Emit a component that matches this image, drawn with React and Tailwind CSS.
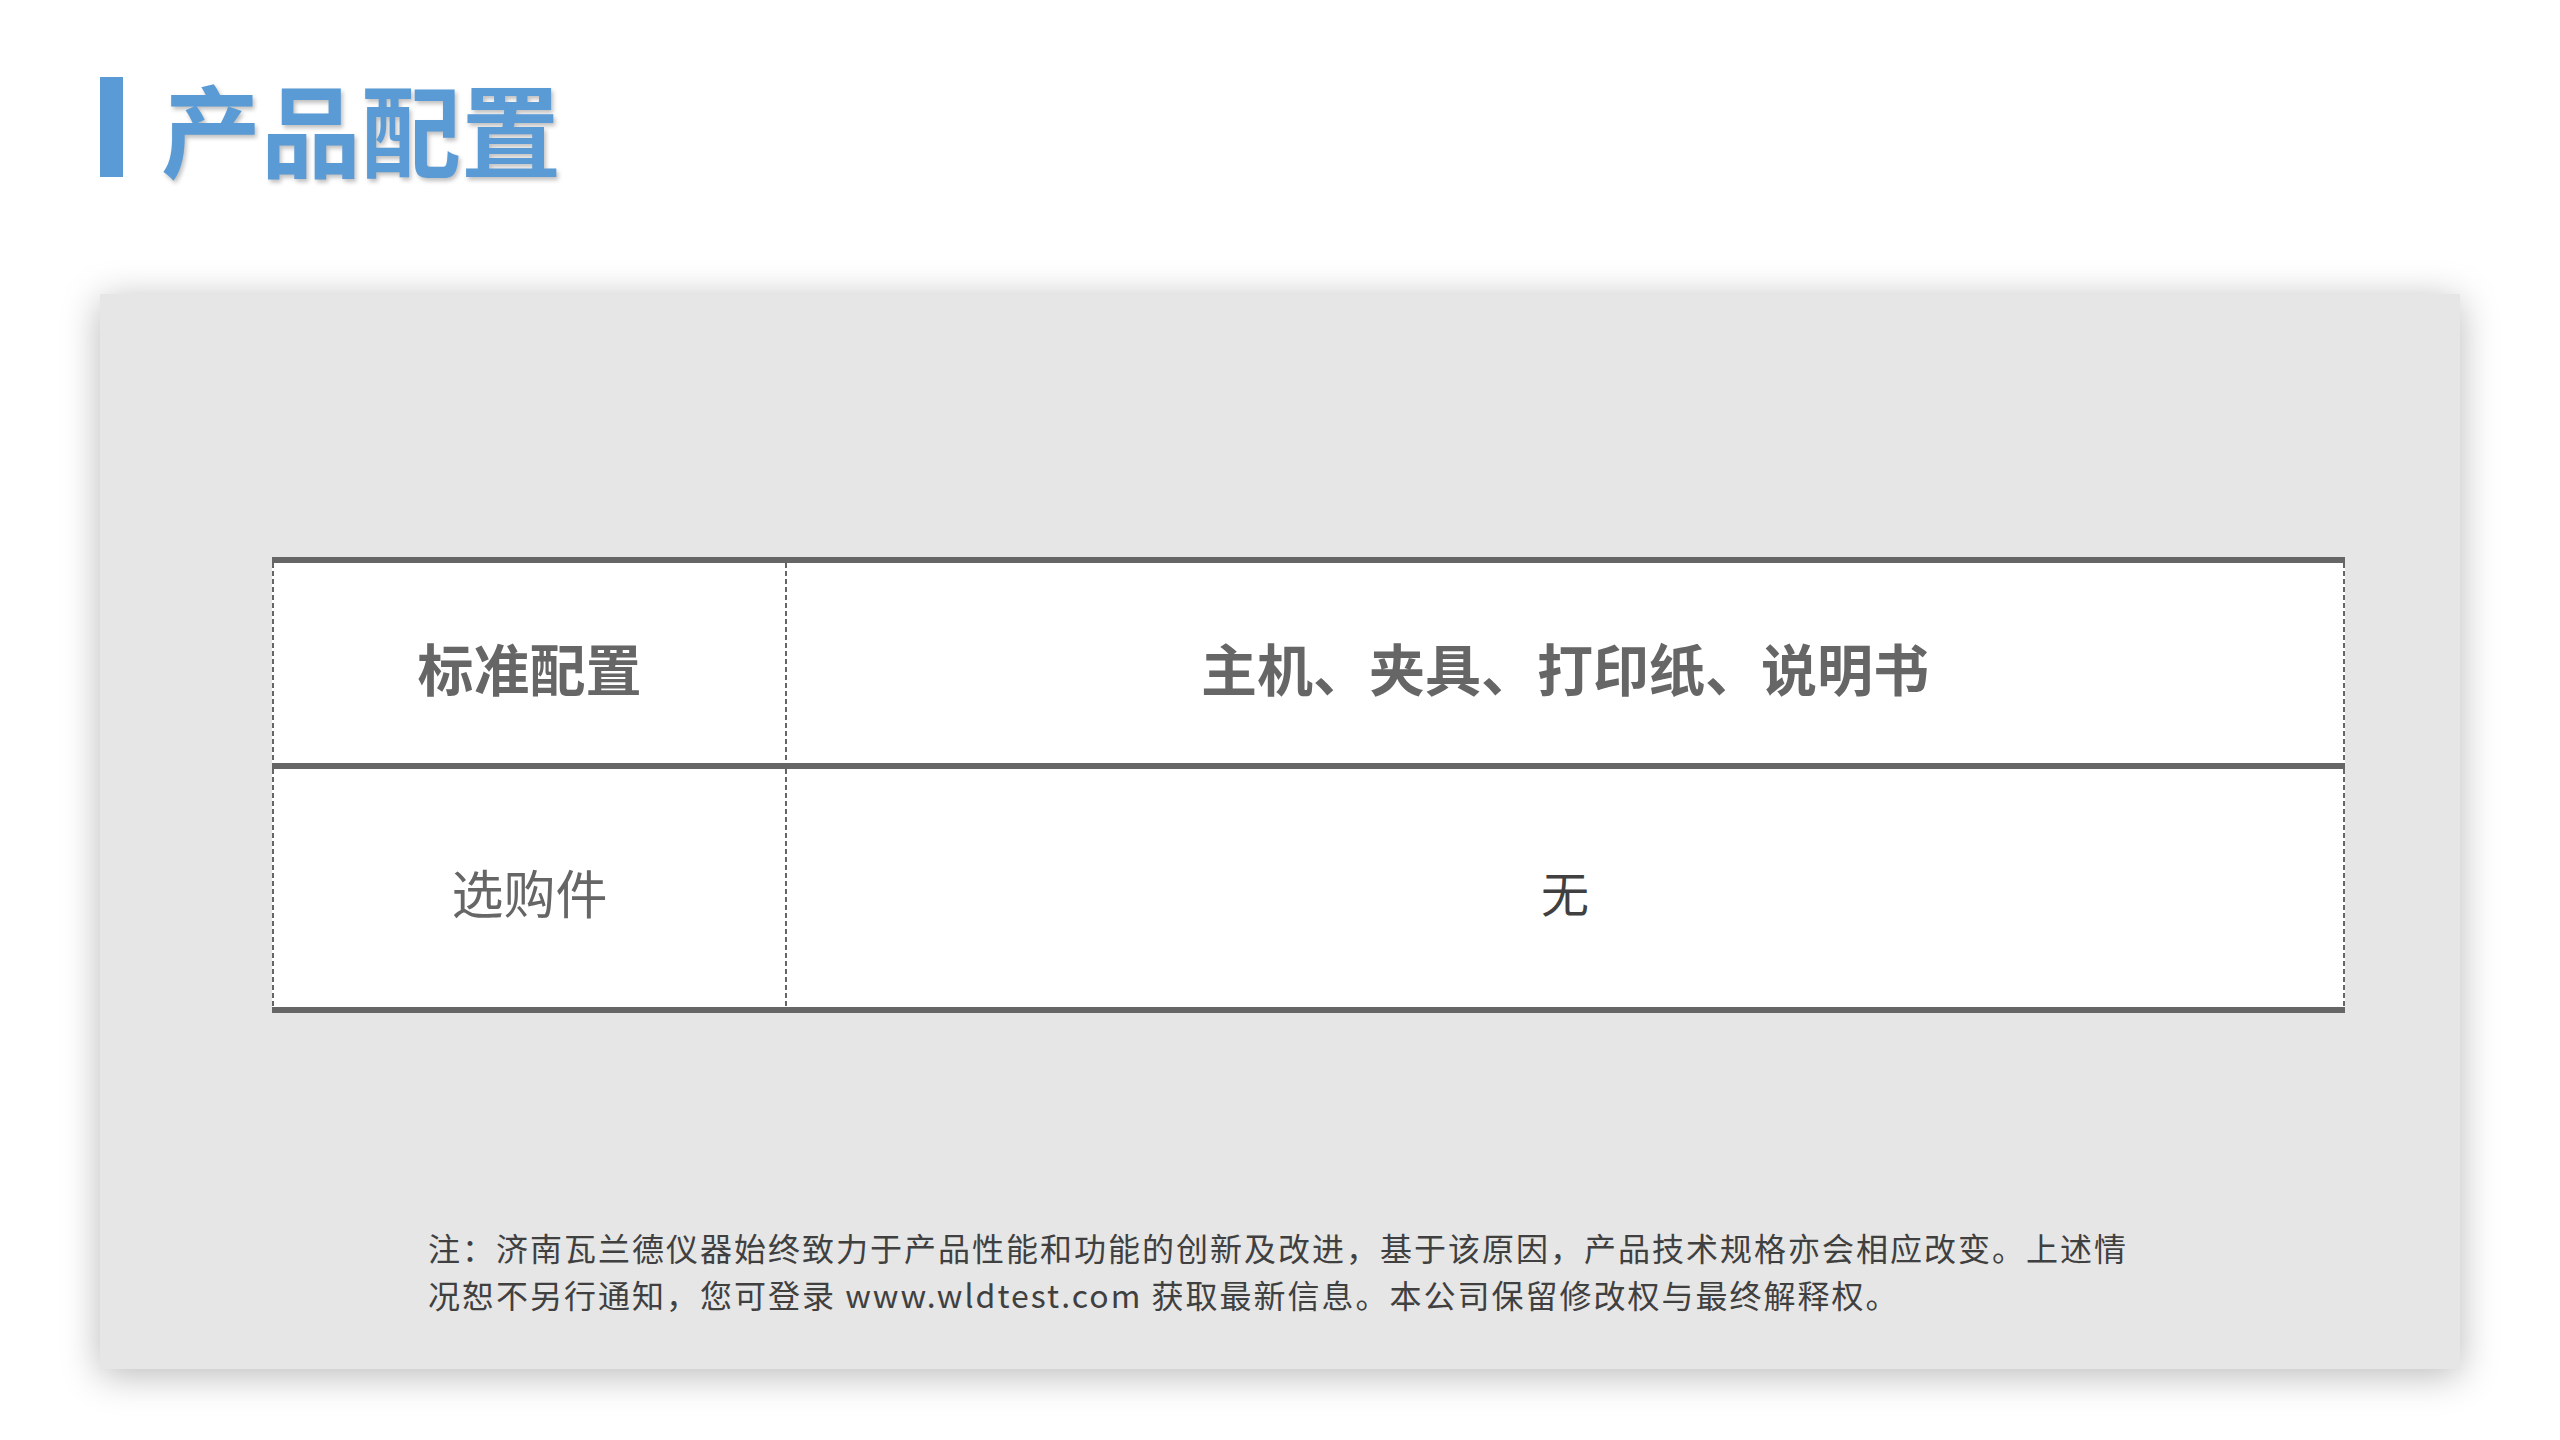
const cjk = { fontFamily: '"Noto Sans CJK SC", "Microsoft YaHei", sans-serif' }

const Dash = () => (
  <div className="w-[2px] shrink-0 self-stretch bg-[image:repeating-linear-gradient(to_bottom,#666_0px,#666_5px,transparent_5px,transparent_8px)]" />
)

const Row = ({ height, left, right }) => (
  <div className={`flex ${height}`}>
    <Dash />
    <div className="w-[511px] flex items-center justify-center">{left}</div>
    <Dash />
    <div className="flex-1 flex items-center justify-center">{right}</div>
    <Dash />
  </div>
)

const App = () => {
  return (
    <div className="w-[2560px] h-[1440px] bg-white pt-[77px] px-[100px]" style={cjk}>
      {/* Title */}
      <div className="flex items-center h-[100px]">
        <div className="w-[23px] h-[100px] bg-[#5b9bd5]" />
        <h1 className="ml-[38px] text-[100px] leading-[100px] font-bold text-[#5b9bd5] [text-shadow:2px_3px_4px_rgba(0,0,0,0.25)]">
          产品配置
        </h1>
      </div>

      {/* Panel */}
      <div className="mt-[117px] h-[1075px] bg-[#e6e6e6] shadow-[0_6px_36px_rgba(0,0,0,0.28)] pt-[263px]">
        <div className="ml-[172px] w-[2073px] bg-white border-t-[6px] border-b-[6px] border-[#666]">
          <Row
            height="h-[200px]"
            left={<span className="text-[56px] font-bold text-[#666] pt-[8px]">标准配置</span>}
            right={<span className="text-[56px] font-bold text-[#666] pt-[8px]">主机、夹具、打印纸、说明书</span>}
          />
          <div className="h-[6px] bg-[#666]" />
          <Row
            height="h-[238px]"
            left={<span className="text-[52px] text-[#666] pt-[8px]">选购件</span>}
            right={<span className="text-[48px] text-[#404040] pt-[6px]">无</span>}
          />
        </div>

        <p className="mt-[211px] ml-[328px] text-[32px] leading-[47px] tracking-[2px] text-[#404040] whitespace-nowrap">
          注：济南瓦兰德仪器始终致力于产品性能和功能的创新及改进，基于该原因，产品技术规格亦会相应改变。上述情
          <br />
          况恕不另行通知，您可登录 www.wldtest.com 获取最新信息。本公司保留修改权与最终解释权。
        </p>
      </div>
    </div>
  )
}

export default App
